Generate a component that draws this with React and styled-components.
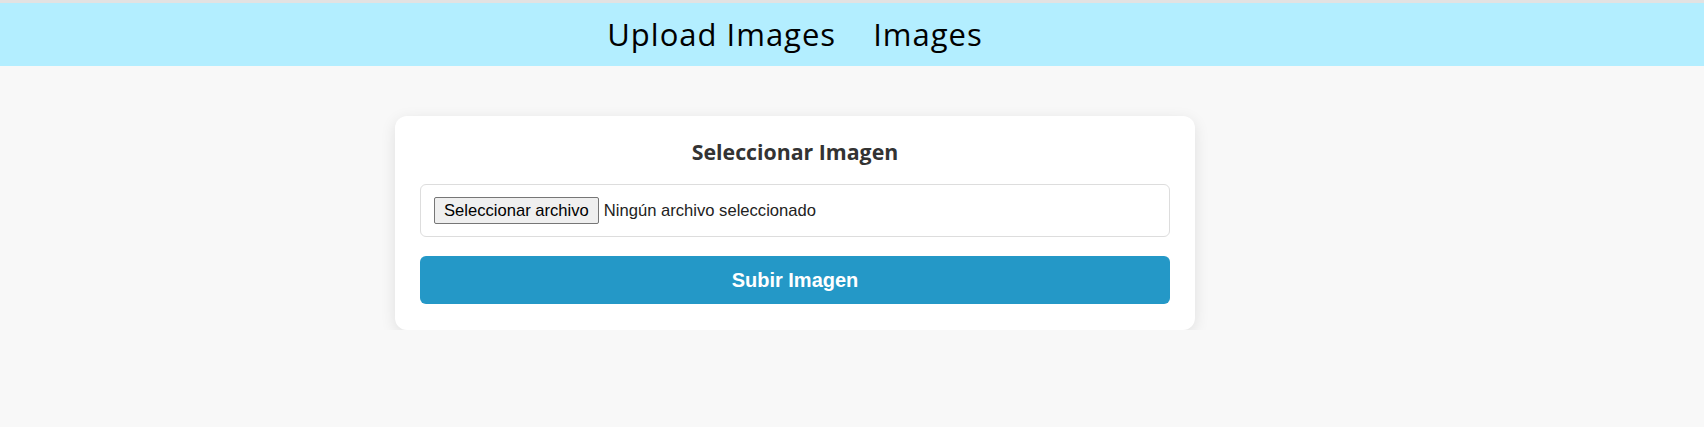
import React, { useState } from 'react';
import styled, { createGlobalStyle } from 'styled-components';

const GlobalStyle = createGlobalStyle`
  html, body {
    margin: 0;
    padding: 0;
    background: #f8f8f8;
  }
  * {
    box-sizing: border-box;
  }
`;

const Header = styled.header`
  background: #b3eeff;
  border-top: 3px solid #e2e2e2;
  height: 66px;
`;

const NavLinks = styled.nav`
  display: flex;
  justify-content: center;
  align-items: center;
  gap: 37px;
  height: 100%;
  padding-right: 114px;
`;

const NavLink = styled.a`
  font-family: 'Open Sans', sans-serif;
  font-size: 31px;
  font-weight: 400;
  line-height: 1;
  letter-spacing: 1px;
  color: #000;
  text-decoration: none;
  cursor: pointer;
`;

const Main = styled.main`
  display: flex;
  justify-content: center;
  padding: 50px 114px 0 0;
`;

const Card = styled.form`
  width: 800px;
  background: #fff;
  border-radius: 12px;
  padding: 23px 25px 26px;
  box-shadow: 0 4px 15px rgba(0, 0, 0, 0.1);
  display: flex;
  flex-direction: column;
`;

const Title = styled.h2`
  margin: 0 0 19px;
  font-family: 'Open Sans', sans-serif;
  font-size: 21.3px;
  font-weight: 700;
  line-height: 26px;
  color: #333;
  text-align: center;
`;

const FileBox = styled.label`
  display: flex;
  align-items: center;
  height: 53px;
  padding: 0 13px;
  border: 1px solid #ddd;
  border-radius: 6px;
  background: #fff;
  font-family: 'Liberation Sans', Arial, sans-serif;
  font-size: 16.6px;
  cursor: pointer;
`;

const HiddenInput = styled.input`
  position: absolute;
  width: 1px;
  height: 1px;
  opacity: 0;
  overflow: hidden;
`;

const PickButton = styled.span`
  display: inline-block;
  padding: 3px 9px;
  line-height: 19px;
  color: #000;
  background: #efefef;
  border: 1px solid #767676;
  border-radius: 2px;
  margin-right: 5px;
`;

const FileName = styled.span`
  color: #222;
`;

const SubmitButton = styled.button`
  margin-top: 19px;
  height: 48px;
  width: 100%;
  border: none;
  border-radius: 6px;
  background: #2498c7;
  color: #fff;
  font-family: 'Liberation Sans', Arial, sans-serif;
  font-size: 20px;
  font-weight: 700;
  cursor: pointer;
`;

export default function App() {
  const [fileName, setFileName] = useState('');

  return (
    <>
      <GlobalStyle />
      <Header>
        <NavLinks>
          <NavLink>Upload Images</NavLink>
          <NavLink>Images</NavLink>
        </NavLinks>
      </Header>
      <Main>
        <Card onSubmit={(e) => e.preventDefault()}>
          <Title>Seleccionar Imagen</Title>
          <FileBox>
            <HiddenInput
              type="file"
              accept="image/*"
              onChange={(e) => setFileName(e.target.files[0] ? e.target.files[0].name : '')}
            />
            <PickButton>Seleccionar archivo</PickButton>
            <FileName>{fileName || 'Ningún archivo seleccionado'}</FileName>
          </FileBox>
          <SubmitButton type="submit">Subir Imagen</SubmitButton>
        </Card>
      </Main>
    </>
  );
}
